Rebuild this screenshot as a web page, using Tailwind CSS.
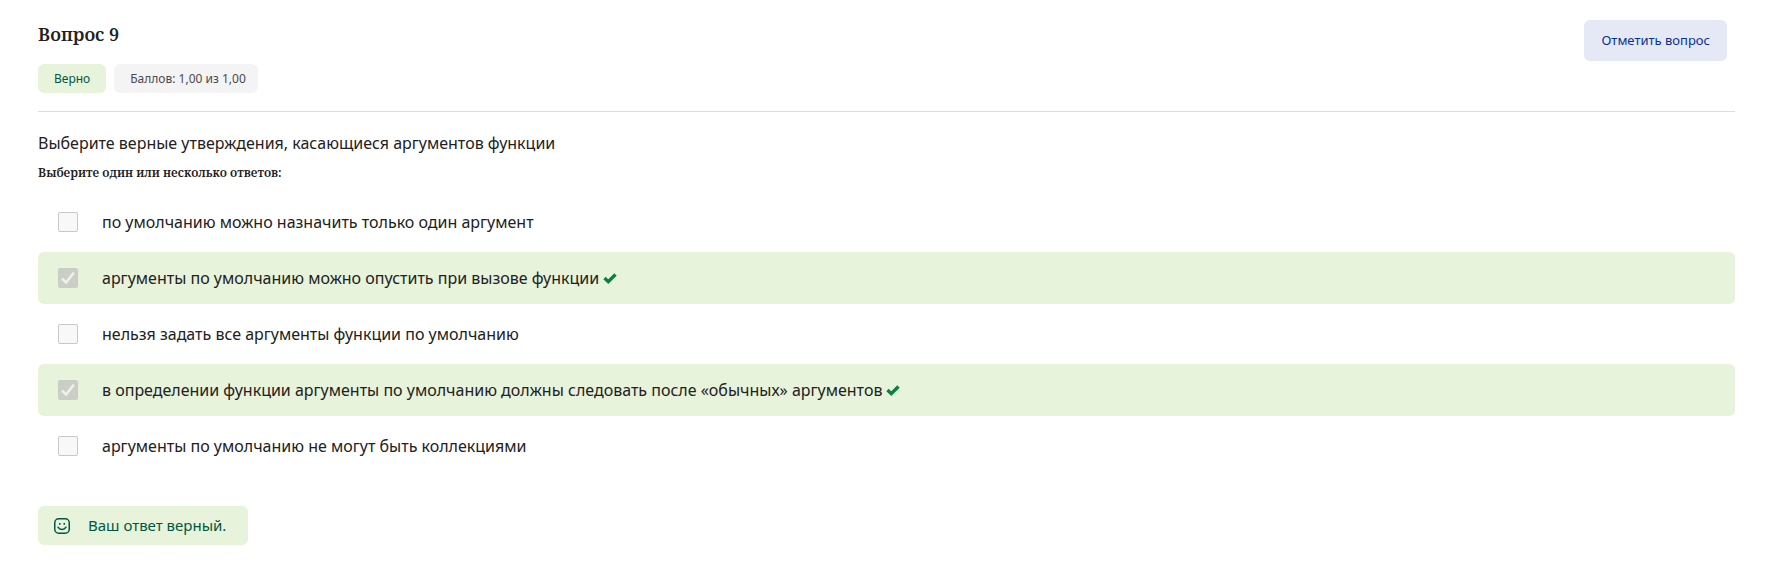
<!DOCTYPE html>
<html lang="ru">
<head>
<meta charset="utf-8">
<meta name="viewport" content="width=device-width, initial-scale=1">
<title>Вопрос 9</title>
<script src="https://cdn.jsdelivr.net/npm/@tailwindcss/browser@4"></script>
</head>
<body class="bg-white pl-[38px] pr-[34px] pt-5 pb-7 font-['Noto_Sans',sans-serif] text-[#212121]">
<main>
  <header class="flex items-start justify-between border-b border-[#dcdde0] pr-2 pb-[18px]">
    <div>
      <h1 class="font-['Noto_Serif','Liberation_Serif',serif] text-lg leading-7 font-semibold">Вопрос 9</h1>
      <div class="mt-4 flex gap-2 text-xs">
        <span class="flex h-[29px] items-center rounded-md bg-[#e8f3dc] px-4 text-[#00573f]">Верно</span>
        <span class="flex h-[29px] items-center rounded-md bg-[#f4f4f5] pr-3 pl-4 text-[#4a4a4a]">Баллов: 1,00 из 1,00</span>
      </div>
    </div>
    <button type="button" class="h-[41px] rounded-md bg-[#e4e9f5] px-[17px] text-[13px] text-[#0b318f]">Отметить вопрос</button>
  </header>

  <form>
    <p class="mt-[19px] text-base leading-6">Выберите верные утверждения, касающиеся аргументов функции</p>
    <fieldset>
      <legend class="pt-2 font-['Noto_Serif','Liberation_Serif',serif] text-xs leading-5 font-semibold">Выберите один или несколько ответов:</legend>
      <div class="mt-[13px] flex flex-col gap-1">
        <label class="flex h-[52px] items-center rounded-md px-5">
          <input type="checkbox" disabled class="size-5 appearance-none rounded-xs border border-[#c8c8c8] bg-[#f8f8f8]">
          <span class="ml-6">по умолчанию можно назначить только один аргумент</span>
        </label>
        <label class="flex h-[52px] items-center rounded-md bg-[#e8f3dc] px-5">
          <span class="grid">
            <input type="checkbox" checked disabled class="col-start-1 row-start-1 size-5 appearance-none rounded-xs bg-[#cacec7]">
            <svg class="col-start-1 row-start-1 size-5" viewBox="0 0 20 20" fill="none" stroke="#edf2e9" stroke-width="2.6" aria-hidden="true"><path d="M4 10.5 8 14.5 16 4.5"/></svg>
          </span>
          <span class="ml-6">аргументы по умолчанию можно опустить при вызове функции</span>
          <svg class="ml-1 h-3.5 w-3.5" viewBox="0 0 14 14" fill="none" stroke="#0b8043" stroke-width="3.4" role="img" aria-label="Верно"><path d="M1.5 7 5.3 10.7 12.5 3.5"/></svg>
        </label>
        <label class="flex h-[52px] items-center rounded-md px-5">
          <input type="checkbox" disabled class="size-5 appearance-none rounded-xs border border-[#c8c8c8] bg-[#f8f8f8]">
          <span class="ml-6">нельзя задать все аргументы функции по умолчанию</span>
        </label>
        <label class="flex h-[52px] items-center rounded-md bg-[#e8f3dc] px-5">
          <span class="grid">
            <input type="checkbox" checked disabled class="col-start-1 row-start-1 size-5 appearance-none rounded-xs bg-[#cacec7]">
            <svg class="col-start-1 row-start-1 size-5" viewBox="0 0 20 20" fill="none" stroke="#edf2e9" stroke-width="2.6" aria-hidden="true"><path d="M4 10.5 8 14.5 16 4.5"/></svg>
          </span>
          <span class="ml-6">в определении функции аргументы по умолчанию должны следовать после «обычных» аргументов</span>
          <svg class="ml-1 h-3.5 w-3.5" viewBox="0 0 14 14" fill="none" stroke="#0b8043" stroke-width="3.4" role="img" aria-label="Верно"><path d="M1.5 7 5.3 10.7 12.5 3.5"/></svg>
        </label>
        <label class="flex h-[52px] items-center rounded-md px-5">
          <input type="checkbox" disabled class="size-5 appearance-none rounded-xs border border-[#c8c8c8] bg-[#f8f8f8]">
          <span class="ml-6">аргументы по умолчанию не могут быть коллекциями</span>
        </label>
      </div>
    </fieldset>
  </form>

  <p class="mt-[34px] flex h-[39px] w-fit items-center rounded-md bg-[#e8f3dc] pr-[22px] pl-4 text-[15px] text-[#00573f]">
    <svg class="mr-[18px] size-4" viewBox="0 0 16 16" fill="none" stroke="currentColor" stroke-width="1.5" aria-hidden="true"><rect x=".75" y=".75" width="14.5" height="14.5" rx="4"/><path d="M4 9.2C5.8 12.2 10.2 12.2 12 9.2" stroke-linecap="round"/><path d="M5 5h1.5v1.7H5zM9.5 5H11v1.7H9.5z" fill="currentColor" stroke="none"/></svg>
    Ваш ответ верный.
  </p>
</main>
</body>
</html>
